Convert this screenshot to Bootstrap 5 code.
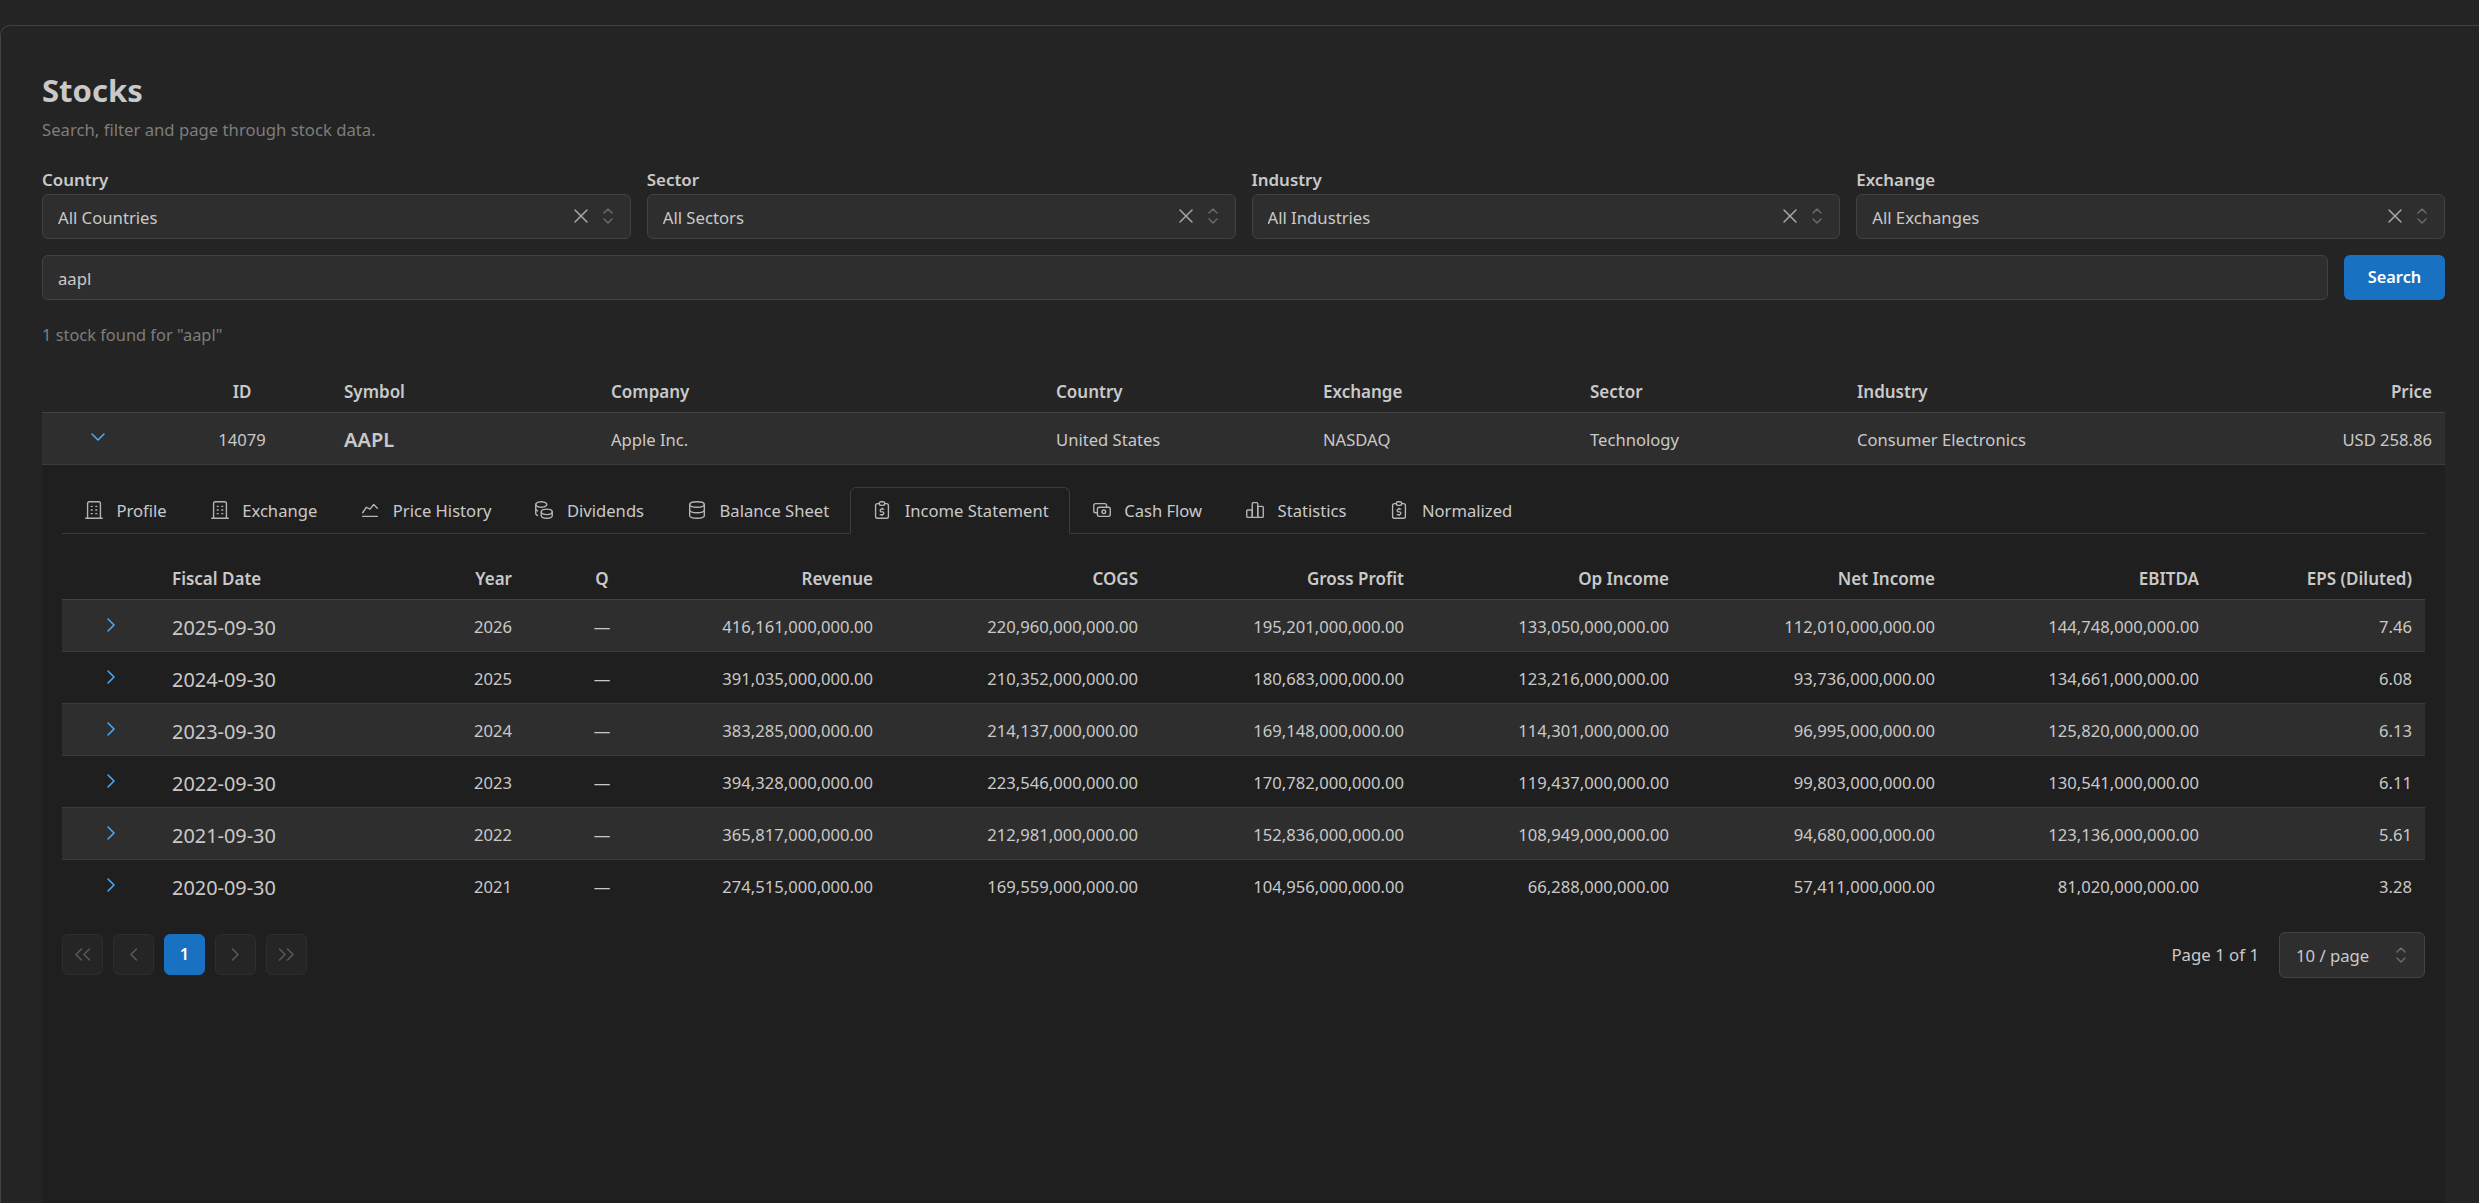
<!DOCTYPE html>
<html lang="en">

<head>
    <meta charset="UTF-8">
    <meta name="viewport" content="width=device-width, initial-scale=1.0">
    <title>Stocks</title>
    <link href="https://cdn.jsdelivr.net/npm/bootstrap@5.3.3/dist/css/bootstrap.min.css" rel="stylesheet">
    <style>
        html, body { height: 100%; overflow: hidden; }
        body { background: #242424; color: #c9c9c9; font-family: "Noto Sans", "Liberation Sans", sans-serif; font-size: 16.6px; padding-top: 25px; }
        .ico { fill: none; stroke: currentColor; stroke-width: 1.5; stroke-linecap: round; stroke-linejoin: round; flex: none; }

        .stock-card { background: #242424; border: 1px solid #424242; border-right: 0; border-bottom: 0; border-radius: 10px 0 0 0; padding: 45px 34px 0 41px; height: 100%; overflow: hidden; }
        .page-title { font-size: 31px; line-height: 38px; font-weight: 700; margin: 0; color: #c9c9c9; }
        .page-sub { color: #7d7d7d; line-height: 24px; margin: 9px 0 27px; font-size: 16.7px; }
        .field-label { font-weight: 600; line-height: 22px; margin-bottom: 3px; display: block; font-size: 16.9px; }

        .dark-input.form-control { background: #2e2e2e; border: 1px solid #424242; border-radius: 6px; color: #c9c9c9; height: 45px; padding: 2px 15px 0; font-size: 16.7px; box-shadow: none; }
        .select-wrap { position: relative; }
        .select-wrap .dark-input { padding-right: 80px; }
        .clear-ico { position: absolute; right: 38px; top: 10px; color: #a8a8a8; }
        .updown-ico { position: absolute; right: 11px; top: 10px; color: #6a6a6a; }
        .search-line { margin-top: 16px; }
        .search-btn.btn { width: 101px; height: 45px; flex: none; background: #1971c2; border: 0; border-radius: 6px; color: #fff; font-weight: 600; font-size: 16.4px; padding: 0; }
        .result-count { color: #7d7d7d; line-height: 24px; margin: 23px 0 24px; font-size: 16.4px; }

        .grid-table.table { --bs-table-bg: transparent; --bs-table-color: #c9c9c9; --bs-table-striped-bg: #2e2e2e; --bs-table-striped-color: #c9c9c9; --bs-table-border-color: #3c3c3c; table-layout: fixed; width: 100%; margin: 0; font-size: 16.6px; }
        .grid-table.table th { font-weight: 600; font-size: 17px; height: 41px; padding: 0 13px; vertical-align: middle; border-bottom: 1px solid #424242; }
        .grid-table.table td { height: 52px; padding: 4px 13px 0; vertical-align: middle; }

        .stocks-grid col:nth-child(1) { width: 111px; }
        .stocks-grid col:nth-child(2) { width: 178px; }
        .stocks-grid col:nth-child(3) { width: 267px; }
        .stocks-grid col:nth-child(4) { width: 445px; }
        .stocks-grid col:nth-child(5), .stocks-grid col:nth-child(6), .stocks-grid col:nth-child(7) { width: 267px; }
        .stocks-grid col:nth-child(8) { width: 266px; }
        .stocks-grid col:nth-child(9) { width: 335px; }

        .income-grid col:nth-child(1) { width: 97px; }
        .income-grid col:nth-child(2) { width: 241px; }
        .income-grid col:nth-child(3) { width: 125px; }
        .income-grid col:nth-child(4) { width: 154px; }
        .income-grid col:nth-child(5) { width: 207px; }
        .income-grid col:nth-child(6), .income-grid col:nth-child(8) { width: 265px; }
        .income-grid col:nth-child(7), .income-grid col:nth-child(9) { width: 266px; }
        .income-grid col:nth-child(10) { width: 264px; }
        .income-grid col:nth-child(11) { width: 213px; }

        .grid-table.table td.ticker { font-weight: 600; font-size: 20px; }
        .grid-table.table td.date-cell { font-size: 19.9px; }
        .grid-table.table td.toggle-cell { padding: 0; text-align: center; color: #4dabf7; }
        .toggle-cell .ico { display: block; margin: -2px auto 0; }

        .grid-table.table td.detail-cell { background: #1f1f1f; padding: 22px 20px 0; height: 739px; vertical-align: top; border-bottom: 0; }

        .detail-tabs.nav-tabs { --bs-nav-tabs-border-color: #3c3c3c; --bs-nav-tabs-border-radius: 6px; --bs-nav-tabs-link-active-bg: #1f1f1f; --bs-nav-tabs-link-active-color: #c9c9c9; --bs-nav-tabs-link-active-border-color: #3c3c3c #3c3c3c #1f1f1f; --bs-nav-link-color: #c9c9c9; --bs-nav-link-hover-color: #c9c9c9; --bs-nav-link-font-size: 16.6px; margin-bottom: 25px; }
        .detail-tabs .nav-link { display: flex; align-items: center; gap: 11.5px; height: 47px; padding: 2px 20px 0; color: #c9c9c9; }
        .detail-tabs .ico { color: #b5b5b5; margin-top: -2px; }

        .income-grid tbody tr:last-child td { border-bottom: 0; }

        .pager-line { margin-top: 20px; height: 46px; }
        .pager-list.pagination { gap: 10px; margin: 0; --bs-pagination-bg: #252525; --bs-pagination-border-color: #2e2e2e; --bs-pagination-color: #5a5a5a; --bs-pagination-active-bg: #1971c2; --bs-pagination-active-border-color: #1971c2; --bs-pagination-active-color: #fff; --bs-pagination-disabled-bg: #252525; --bs-pagination-disabled-border-color: #2e2e2e; --bs-pagination-disabled-color: #5a5a5a; }
        .pager-list .page-item .page-link { width: 41px; height: 41px; padding: 0; margin: 0; display: flex; align-items: center; justify-content: center; border-radius: 6px; font-size: 16.4px; font-weight: 600; }
        .page-note { line-height: 24px; font-size: 16.8px; }
        .per-page { width: 146px; }
        .per-page .dark-input.form-control { height: 46px; padding: 2px 16px 0; }
        .per-page .updown-ico { right: 12px; top: 11px; color: #6a6a6a; }
    </style>
</head>

<body>
    <!-- tabler style icons -->
    <svg width="0" height="0" class="position-absolute">
        <symbol id="i-building" viewBox="0 0 24 24"><path d="M3 21h18"/><path d="M9 8h1"/><path d="M9 12h1"/><path d="M9 16h1"/><path d="M14 8h1"/><path d="M14 12h1"/><path d="M14 16h1"/><path d="M5 21v-16a2 2 0 0 1 2 -2h10a2 2 0 0 1 2 2v16"/></symbol>
        <symbol id="i-chart-line" viewBox="0 0 24 24"><path d="M4 19h16"/><path d="M4 15l4 -6l4 2l4 -5l4 4"/></symbol>
        <symbol id="i-coins" viewBox="0 0 24 24"><path d="M9 14c0 1.657 2.686 3 6 3s6 -1.343 6 -3s-2.686 -3 -6 -3s-6 1.343 -6 3z"/><path d="M9 14v4c0 1.656 2.686 3 6 3s6 -1.344 6 -3v-4"/><path d="M3 6c0 1.072 1.144 2.062 3 2.598s4.144 .536 6 0c1.856 -.536 3 -1.526 3 -2.598c0 -1.072 -1.144 -2.062 -3 -2.598s-4.144 -.536 -6 0c-1.856 .536 -3 1.526 -3 2.598z"/><path d="M3 6v10c0 .888 .772 1.45 2 2"/><path d="M3 11c0 .888 .772 1.45 2 2"/></symbol>
        <symbol id="i-database" viewBox="0 0 24 24"><path d="M4 6a8 3 0 1 0 16 0a8 3 0 1 0 -16 0"/><path d="M4 6v6a8 3 0 0 0 16 0v-6"/><path d="M4 12v6a8 3 0 0 0 16 0v-6"/></symbol>
        <symbol id="i-report" viewBox="0 0 24 24"><path d="M9 5h-2a2 2 0 0 0 -2 2v12a2 2 0 0 0 2 2h10a2 2 0 0 0 2 -2v-12a2 2 0 0 0 -2 -2h-2"/><path d="M9 5a2 2 0 0 1 2 -2h2a2 2 0 0 1 2 2a2 2 0 0 1 -2 2h-2a2 2 0 0 1 -2 -2z"/><path d="M14 11h-2.5a1.5 1.5 0 0 0 0 3h1a1.5 1.5 0 0 1 0 3h-2.5"/><path d="M12 17v1m0 -8v1"/></symbol>
        <symbol id="i-cash" viewBox="0 0 24 24"><path d="M7 11a2 2 0 0 1 2 -2h10a2 2 0 0 1 2 2v6a2 2 0 0 1 -2 2h-10a2 2 0 0 1 -2 -2z"/><path d="M12 14a2 2 0 1 0 4 0a2 2 0 1 0 -4 0"/><path d="M17 9v-2a2 2 0 0 0 -2 -2h-10a2 2 0 0 0 -2 2v6a2 2 0 0 0 2 2h2"/></symbol>
        <symbol id="i-bars" viewBox="0 0 24 24"><path d="M3 13a1 1 0 0 1 1 -1h4a1 1 0 0 1 1 1v6a1 1 0 0 1 -1 1h-4a1 1 0 0 1 -1 -1z"/><path d="M15 9a1 1 0 0 1 1 -1h4a1 1 0 0 1 1 1v10a1 1 0 0 1 -1 1h-4a1 1 0 0 1 -1 -1z"/><path d="M9 5a1 1 0 0 1 1 -1h4a1 1 0 0 1 1 1v14a1 1 0 0 1 -1 1h-4a1 1 0 0 1 -1 -1z"/></symbol>
        <symbol id="i-x" viewBox="0 0 24 24"><path d="M18 6l-12 12"/><path d="M6 6l12 12"/></symbol>
        <symbol id="i-updown" viewBox="0 0 24 24"><path d="M8 9l4 -4l4 4"/><path d="M16 15l-4 4l-4 -4"/></symbol>
        <symbol id="i-down" viewBox="0 0 24 24"><path d="M6 9l6 6l6 -6"/></symbol>
        <symbol id="i-right" viewBox="0 0 24 24"><path d="M9 6l6 6l-6 6"/></symbol>
        <symbol id="i-pg-left" viewBox="0 0 9 13"><path d="M7.5 1L2 6.5L7.5 12"/></symbol>
        <symbol id="i-pg-right" viewBox="0 0 9 13"><path d="M1.5 1L7 6.5L1.5 12"/></symbol>
        <symbol id="i-pg-lefts" viewBox="0 0 17 13"><path d="M7.5 1L2 6.5L7.5 12"/><path d="M15.5 1L10 6.5L15.5 12"/></symbol>
        <symbol id="i-pg-rights" viewBox="0 0 17 13"><path d="M1.5 1L7 6.5L1.5 12"/><path d="M9.5 1L15 6.5L9.5 12"/></symbol>
    </svg>

    <div class="stock-card">
        <h1 class="page-title">Stocks</h1>
        <p class="page-sub">Search, filter and page through stock data.</p>

        <div class="row gx-3" id="filters"></div>

        <div class="d-flex gap-3 search-line">
            <input class="form-control dark-input" value="aapl">
            <button class="btn search-btn">Search</button>
        </div>

        <div class="result-count">1 stock found for "aapl"</div>

        <table class="table table-striped grid-table stocks-grid">
            <colgroup><col><col><col><col><col><col><col><col><col></colgroup>
            <thead>
                <tr>
                    <th></th>
                    <th class="text-center">ID</th>
                    <th>Symbol</th>
                    <th>Company</th>
                    <th>Country</th>
                    <th>Exchange</th>
                    <th>Sector</th>
                    <th>Industry</th>
                    <th class="text-end">Price</th>
                </tr>
            </thead>
            <tbody>
                <tr>
                    <td class="toggle-cell"><svg class="ico" width="24" height="24"><use href="#i-down"/></svg></td>
                    <td class="text-center">14079</td>
                    <td class="ticker">AAPL</td>
                    <td>Apple Inc.</td>
                    <td>United States</td>
                    <td>NASDAQ</td>
                    <td>Technology</td>
                    <td>Consumer Electronics</td>
                    <td class="text-end">USD 258.86</td>
                </tr>
                <tr>
                    <td colspan="9" class="detail-cell">
                        <ul class="nav nav-tabs detail-tabs" id="tabs"></ul>
                        <table class="table table-striped grid-table income-grid">
                            <colgroup><col><col><col><col><col><col><col><col><col><col><col></colgroup>
                            <thead>
                                <tr>
                                    <th></th>
                                    <th>Fiscal Date</th>
                                    <th class="text-end">Year</th>
                                    <th class="text-center">Q</th>
                                    <th class="text-end">Revenue</th>
                                    <th class="text-end">COGS</th>
                                    <th class="text-end">Gross Profit</th>
                                    <th class="text-end">Op Income</th>
                                    <th class="text-end">Net Income</th>
                                    <th class="text-end">EBITDA</th>
                                    <th class="text-end">EPS (Diluted)</th>
                                </tr>
                            </thead>
                            <tbody id="incomeRows"></tbody>
                        </table>

                        <div class="d-flex justify-content-between align-items-center pager-line">
                            <ul class="pagination pager-list">
                                <li class="page-item disabled"><a class="page-link"><svg class="ico" width="17" height="13"><use href="#i-pg-lefts"/></svg></a></li>
                                <li class="page-item disabled"><a class="page-link"><svg class="ico" width="9" height="13"><use href="#i-pg-left"/></svg></a></li>
                                <li class="page-item active"><a class="page-link">1</a></li>
                                <li class="page-item disabled"><a class="page-link"><svg class="ico" width="9" height="13"><use href="#i-pg-right"/></svg></a></li>
                                <li class="page-item disabled"><a class="page-link"><svg class="ico" width="17" height="13"><use href="#i-pg-rights"/></svg></a></li>
                            </ul>
                            <div class="d-flex align-items-center gap-3">
                                <span class="page-note me-1">Page 1 of 1</span>
                                <div class="select-wrap per-page">
                                    <input class="form-control dark-input" value="10 / page" readonly>
                                    <svg class="ico updown-ico" width="24" height="24"><use href="#i-updown"/></svg>
                                </div>
                            </div>
                        </div>
                    </td>
                </tr>
            </tbody>
        </table>
    </div>

    <script>
        // filtros
        const filtros = [['Country', 'All Countries'], ['Sector', 'All Sectors'], ['Industry', 'All Industries'], ['Exchange', 'All Exchanges']];
        document.getElementById('filters').innerHTML = filtros.map(f => `
            <div class="col-3">
                <label class="field-label">${f[0]}</label>
                <div class="select-wrap">
                    <input class="form-control dark-input" value="${f[1]}" readonly>
                    <svg class="ico clear-ico" width="24" height="24"><use href="#i-x"/></svg>
                    <svg class="ico updown-ico" width="24" height="24"><use href="#i-updown"/></svg>
                </div>
            </div>`).join('');

        // pestañas
        const tabs = [['i-building', 'Profile'], ['i-building', 'Exchange'], ['i-chart-line', 'Price History'], ['i-coins', 'Dividends'], ['i-database', 'Balance Sheet'], ['i-report', 'Income Statement'], ['i-cash', 'Cash Flow'], ['i-bars', 'Statistics'], ['i-report', 'Normalized']];
        document.getElementById('tabs').innerHTML = tabs.map(t => `
            <li class="nav-item"><a class="nav-link${t[1] === 'Income Statement' ? ' active' : ''}"><svg class="ico" width="22" height="22"><use href="#${t[0]}"/></svg>${t[1]}</a></li>`).join('');

        // filas
        const filas = [
            ['2025-09-30', 2026, '416,161,000,000.00', '220,960,000,000.00', '195,201,000,000.00', '133,050,000,000.00', '112,010,000,000.00', '144,748,000,000.00', '7.46'],
            ['2024-09-30', 2025, '391,035,000,000.00', '210,352,000,000.00', '180,683,000,000.00', '123,216,000,000.00', '93,736,000,000.00', '134,661,000,000.00', '6.08'],
            ['2023-09-30', 2024, '383,285,000,000.00', '214,137,000,000.00', '169,148,000,000.00', '114,301,000,000.00', '96,995,000,000.00', '125,820,000,000.00', '6.13'],
            ['2022-09-30', 2023, '394,328,000,000.00', '223,546,000,000.00', '170,782,000,000.00', '119,437,000,000.00', '99,803,000,000.00', '130,541,000,000.00', '6.11'],
            ['2021-09-30', 2022, '365,817,000,000.00', '212,981,000,000.00', '152,836,000,000.00', '108,949,000,000.00', '94,680,000,000.00', '123,136,000,000.00', '5.61'],
            ['2020-09-30', 2021, '274,515,000,000.00', '169,559,000,000.00', '104,956,000,000.00', '66,288,000,000.00', '57,411,000,000.00', '81,020,000,000.00', '3.28']
        ];
        document.getElementById('incomeRows').innerHTML = filas.map(f => `
            <tr>
                <td class="toggle-cell"><svg class="ico" width="24" height="24"><use href="#i-right"/></svg></td>
                <td class="date-cell">${f[0]}</td>
                <td class="text-end">${f[1]}</td>
                <td class="text-center">—</td>
                ${f.slice(2).map(v => `<td class="text-end">${v}</td>`).join('')}
            </tr>`).join('');
    </script>
    <script src="https://cdn.jsdelivr.net/npm/bootstrap@5.3.3/dist/js/bootstrap.bundle.min.js"></script>
</body>

</html>
